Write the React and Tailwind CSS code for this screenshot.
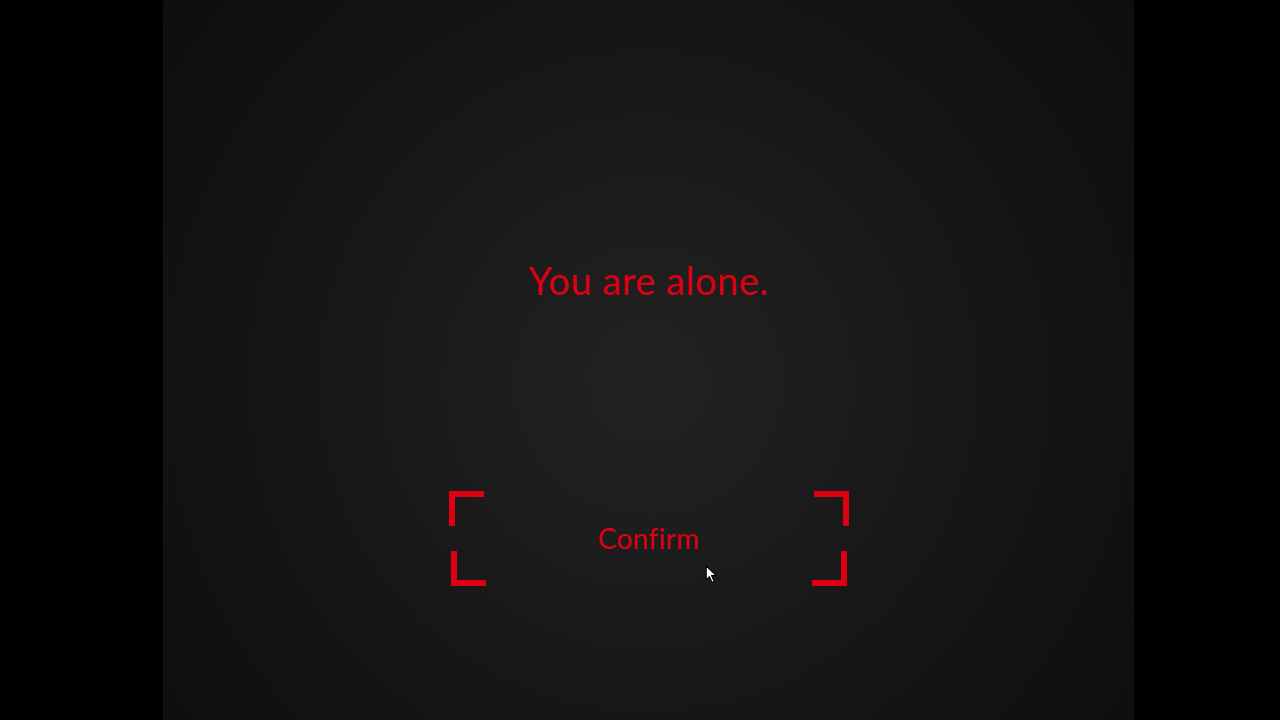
import React from "react";

// corner bracket pieces for the confirm frame
function Corner({ className }) {
  return <span className={`absolute w-[35px] h-[35px] border-[#dd0012] ${className}`} />;
}

function Cursor() {
  return (
    <svg
      className="absolute left-[705px] top-[565px]"
      width="13"
      height="19"
      viewBox="0 0 12 18"
    >
      <path
        d="M1 1 L1 14 L4 11 L6.5 16.5 L8.5 15.5 L6 10 L10.5 10 Z"
        fill="#fff"
        stroke="#000"
        strokeWidth="1"
        strokeLinejoin="round"
      />
    </svg>
  );
}

export default function App() {
  return (
    <div className="relative flex h-[720px] w-[1280px] bg-black overflow-hidden" style={{ fontFamily: "Lato, 'Noto Sans', sans-serif" }}>
      <div className="w-[163px] shrink-0 bg-black" />
      <main className="flex w-[971px] shrink-0 flex-col items-center bg-[radial-gradient(circle_at_50%_53%,#222222_0%,#1c1c1c_30%,#151515_60%,#0e0e0e_100%)]">
        <h1 className="mt-[256px] h-[48px] text-[38px] leading-[48px] font-normal tracking-[0.5px] text-[#dd0012]">
          You are alone.
        </h1>
        <button className="relative mt-[187px] flex h-[95px] w-[400px] items-center justify-center text-[28px] text-[#dd0012]">
          <Corner className="left-0 top-0 border-l-[6px] border-t-[6px]" />
          <Corner className="right-0 top-0 border-r-[6px] border-t-[6px]" />
          <Corner className="left-[2px] bottom-0 border-l-[6px] border-b-[6px]" />
          <Corner className="right-[2px] bottom-0 border-r-[6px] border-b-[6px]" />
          <span className="mb-[1px] tracking-[0.3px]">Confirm</span>
        </button>
      </main>
      <div className="flex-1 bg-black" />
      <Cursor />
    </div>
  );
}
